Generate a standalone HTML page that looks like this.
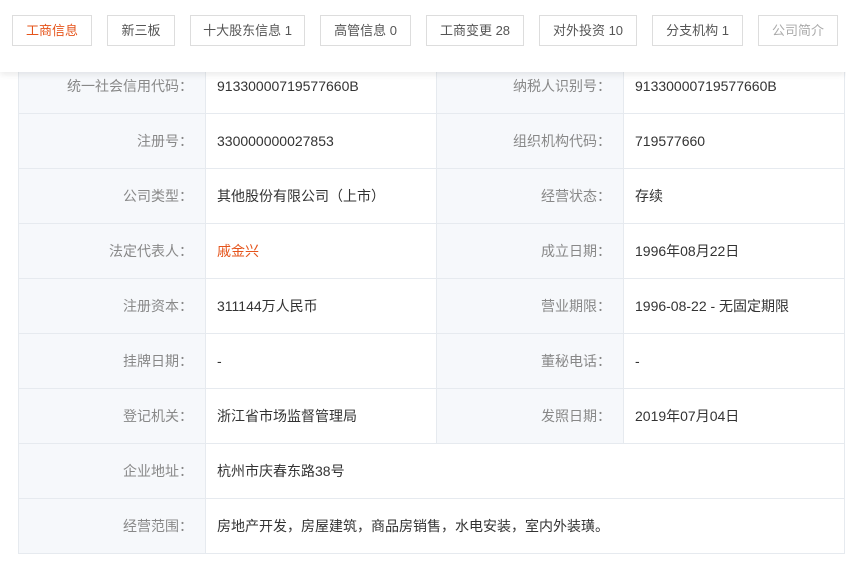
<!DOCTYPE html>
<html><head><meta charset="utf-8"><style>
*{margin:0;padding:0;box-sizing:border-box}
body{width:846px;height:563px;background:#fff;font-family:"Liberation Sans","Noto Sans CJK SC",sans-serif;font-size:13px;position:relative;overflow:hidden}
.hd{position:absolute;left:0;top:0;width:846px;height:72px;background:#fff;box-shadow:0 3px 6px rgba(0,0,0,0.08);z-index:2}
.tab{position:absolute;top:15px;height:31px;border:1px solid #ddd;line-height:29px;text-align:center;color:#555;font-size:13px;background:#fff}
table{position:absolute;left:18px;top:58px;border-collapse:collapse;width:827px}
td{border:1px solid #e6eaef;height:55px;font-size:14px}
td.l{background:#f6f8fb;color:#888;text-align:right;padding-right:12px}
td.v{color:#333;padding-left:11px}
</style></head><body>
<div class="hd">
<div class="tab" style="left:12px;width:80px;color:#e5541b">工商信息</div>
<div class="tab" style="left:107px;width:68px">新三板</div>
<div class="tab" style="left:190px;width:115px">十大股东信息 1</div>
<div class="tab" style="left:320px;width:91px">高管信息 0</div>
<div class="tab" style="left:426px;width:98px">工商变更 28</div>
<div class="tab" style="left:539px;width:98px">对外投资 10</div>
<div class="tab" style="left:652px;width:91px">分支机构 1</div>
<div class="tab" style="left:758px;width:80px;color:#aaa">公司简介</div>
</div>
<table>
<col style="width:187px"><col style="width:231px"><col style="width:187px"><col>
<tr><td class="l">统一社会信用代码：</td><td class="v">91330000719577660B</td><td class="l">纳税人识别号：</td><td class="v">91330000719577660B</td></tr>
<tr><td class="l">注册号：</td><td class="v">330000000027853</td><td class="l">组织机构代码：</td><td class="v">719577660</td></tr>
<tr><td class="l">公司类型：</td><td class="v">其他股份有限公司（上市）</td><td class="l">经营状态：</td><td class="v">存续</td></tr>
<tr><td class="l">法定代表人：</td><td class="v" style="color:#e5541b">戚金兴</td><td class="l">成立日期：</td><td class="v">1996年08月22日</td></tr>
<tr><td class="l">注册资本：</td><td class="v">311144万人民币</td><td class="l">营业期限：</td><td class="v">1996-08-22 - 无固定期限</td></tr>
<tr><td class="l">挂牌日期：</td><td class="v">-</td><td class="l">董秘电话：</td><td class="v">-</td></tr>
<tr><td class="l">登记机关：</td><td class="v">浙江省市场监督管理局</td><td class="l">发照日期：</td><td class="v">2019年07月04日</td></tr>
<tr><td class="l">企业地址：</td><td class="v" colspan="3">杭州市庆春东路38号</td></tr>
<tr><td class="l">经营范围：</td><td class="v" colspan="3">房地产开发，房屋建筑，商品房销售，水电安装，室内外装璜。</td></tr>
</table>
</body></html>
